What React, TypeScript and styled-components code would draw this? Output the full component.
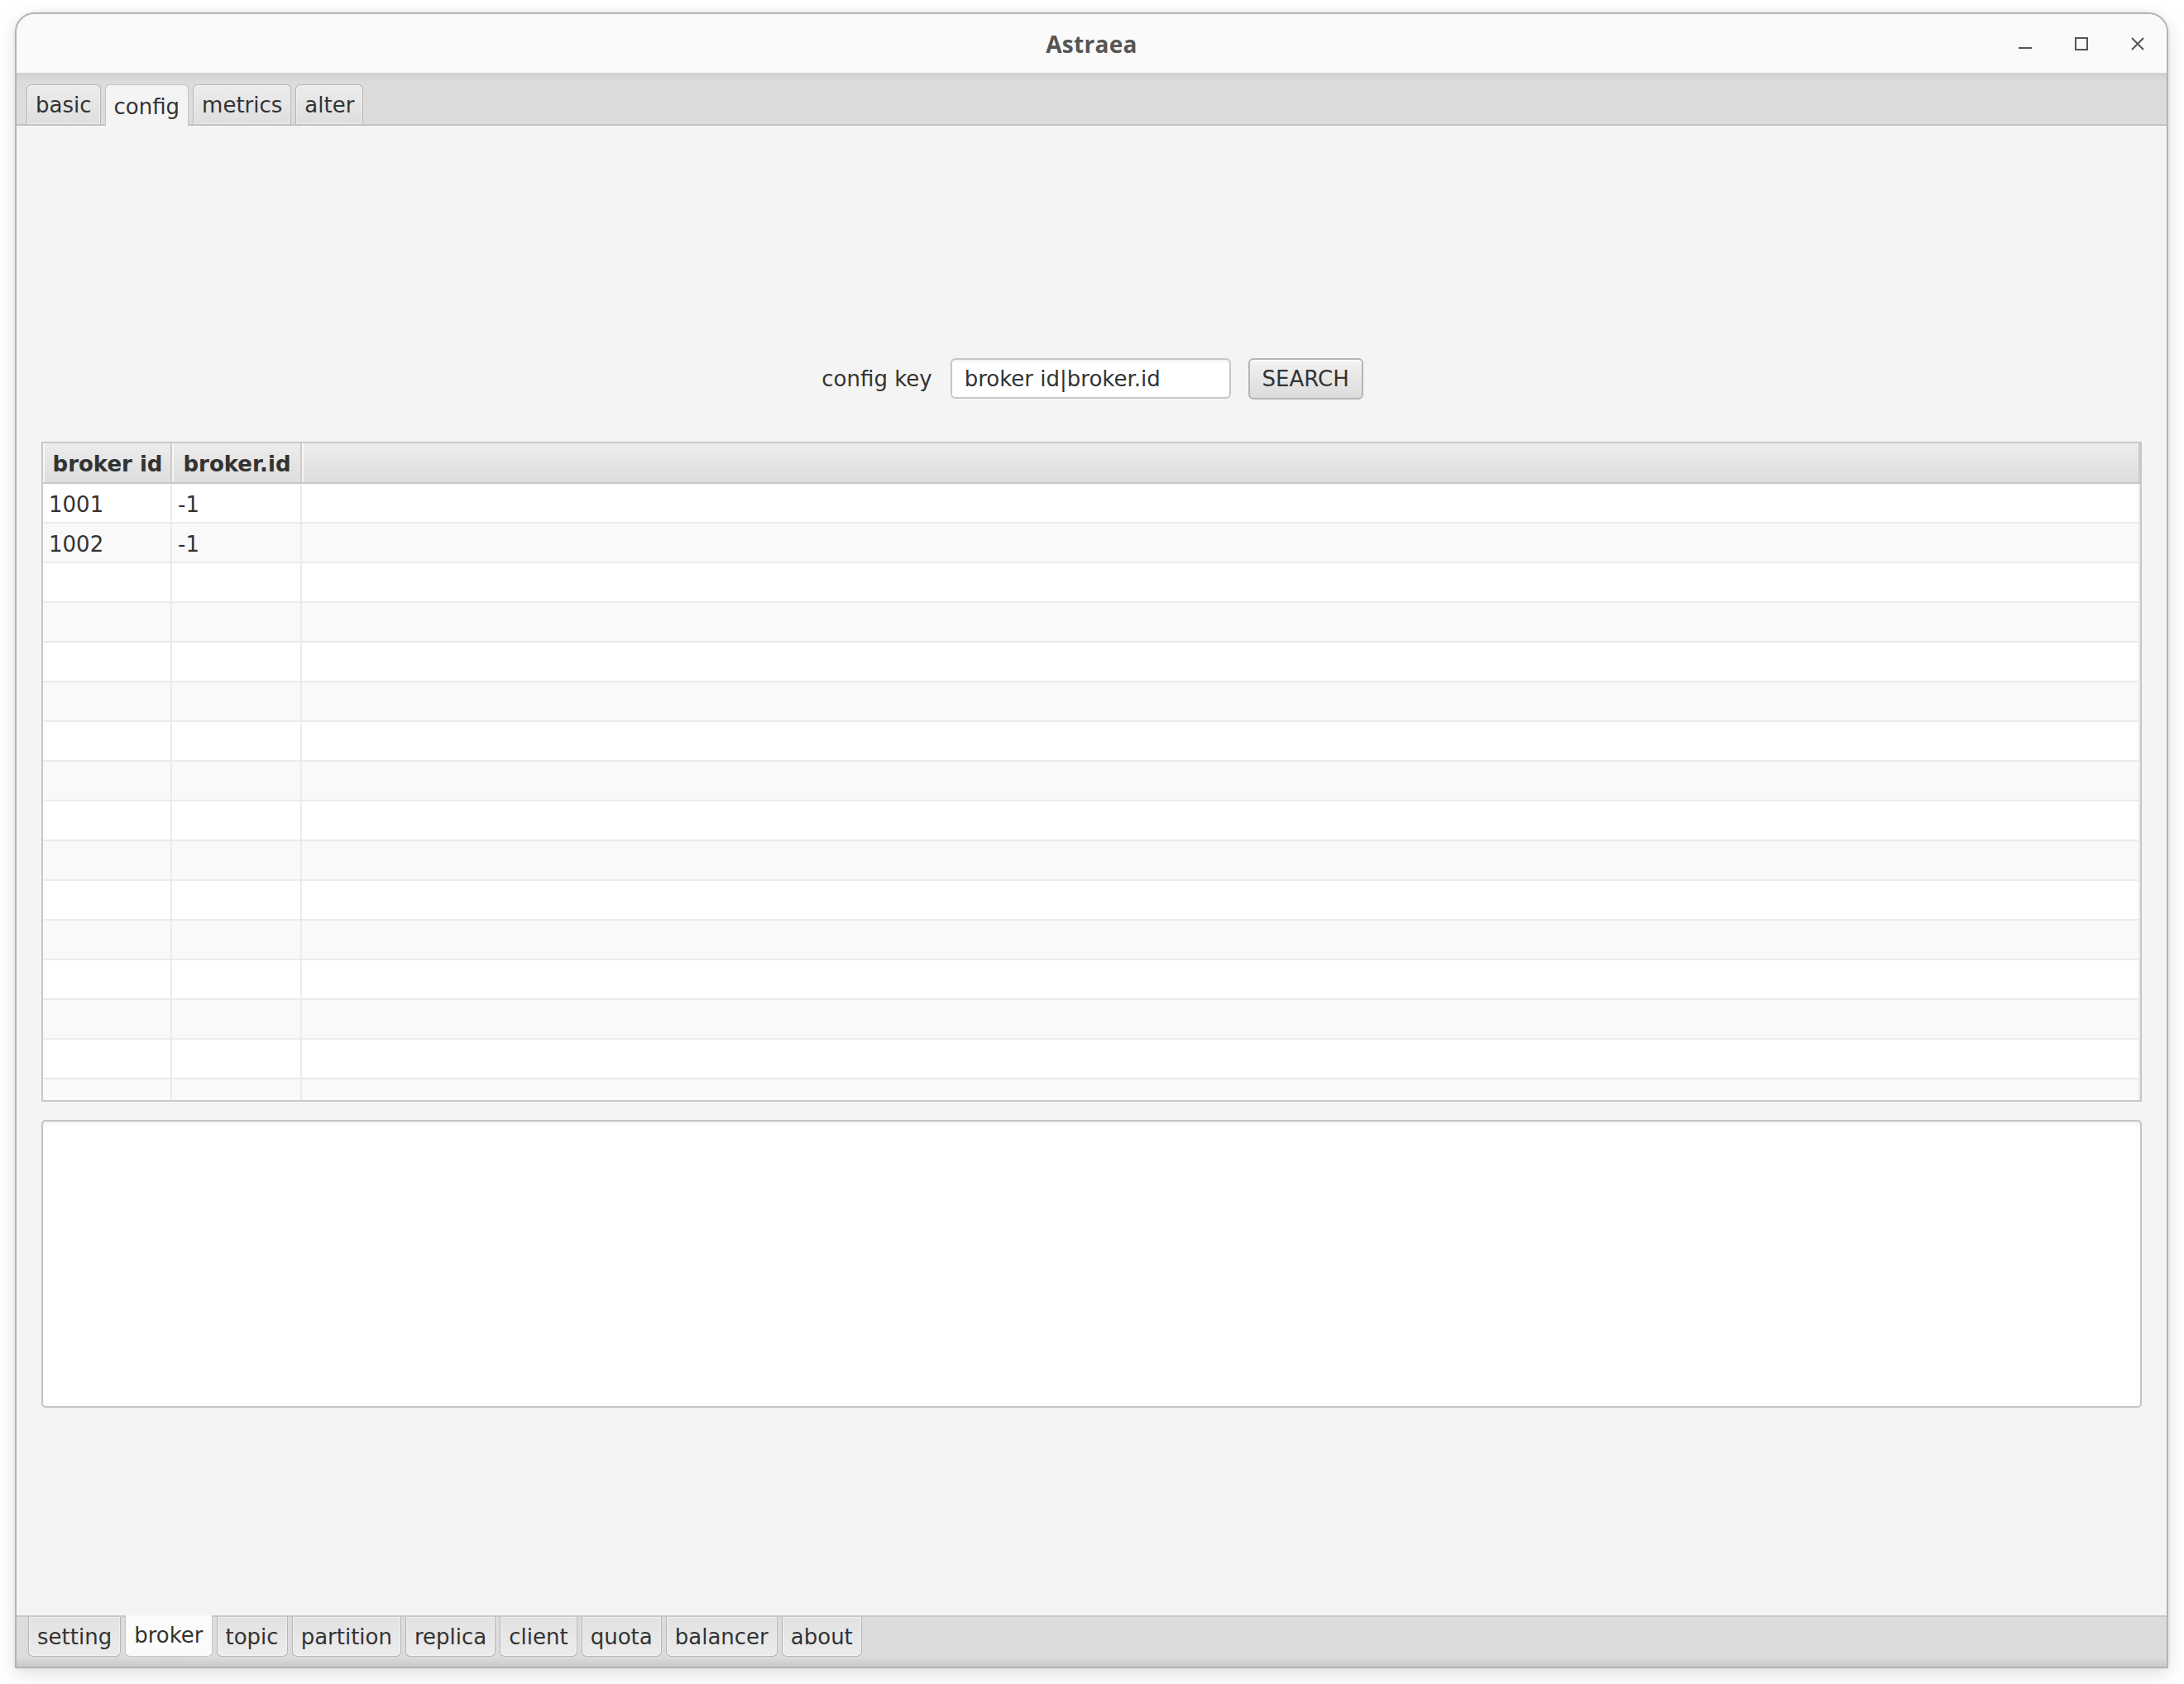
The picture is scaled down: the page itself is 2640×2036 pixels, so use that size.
import React from "react";
import styled, { createGlobalStyle } from "styled-components";

const GlobalStyle = createGlobalStyle`
  html, body { margin: 0; padding: 0; background: #ffffff; }
  body { font-family: "DejaVu Sans", "Liberation Sans", sans-serif; color: #333333; }
  * { box-sizing: border-box; }
`;

const Page = styled.div`
  padding: 15px 19px 19px 18px;
  width: 2640px;
  height: 2036px;
`;

const Window = styled.div`
  width: 2603px;
  height: 2002px;
  display: flex;
  flex-direction: column;
  border: 2px solid #b3b3b3;
  border-radius: 24px 24px 0 0;
  overflow: hidden;
  box-shadow: 0 6px 22px rgba(0, 0, 0, 0.13), 0 0 4px rgba(0, 0, 0, 0.08);
  background: #f4f4f4;
`;

const TitleBar = styled.div`
  height: 71px;
  flex: none;
  background: #fafafa;
  display: grid;
  grid-template-columns: 1fr auto 1fr;
  align-items: center;
`;

const Title = styled.div`
  grid-column: 2;
  font-family: "Open Sans", "Noto Sans", sans-serif;
  font-weight: 700;
  font-size: 28px;
  color: #555555;
  letter-spacing: 0.3px;
`;

const Controls = styled.div`
  grid-column: 3;
  justify-self: end;
  display: flex;
  align-items: center;
  gap: 52px;
  padding-right: 27px;
`;

const ControlIcon = styled.svg`
  width: 16px;
  height: 16px;
  display: block;
`;

const TabBar = styled.div<{ $bottom?: boolean }>`
  flex: none;
  height: ${(p) => (p.$bottom ? "62px" : "64px")};
  display: flex;
  align-items: ${(p) => (p.$bottom ? "flex-start" : "flex-end")};
  gap: ${(p) => (p.$bottom ? "5px" : "5px")};
  padding-left: ${(p) => (p.$bottom ? "14px" : "12px")};
  background: ${(p) =>
    p.$bottom
      ? "linear-gradient(to bottom, #dcdcdc 0, #dcdcdc 48px, #c9c9c9 60px, #c4c4c4 62px)"
      : "linear-gradient(to bottom, #d0d0d0 0, #dcdcdc 12px, #dcdcdc 100%)"};
  ${(p) =>
    p.$bottom
      ? "border-top: 2px solid #c8c8c8;"
      : "border-bottom: 2px solid #c2c2c2;"}
`;

const Tab = styled.div<{ $active?: boolean; $bottom?: boolean }>`
  height: ${(p) => (p.$active ? "50px" : "48px")};
  ${(p) => (p.$active ? (p.$bottom ? "margin-top: -2px;" : "margin-bottom: -2px;") : "")}
  padding: 0 10px;
  display: flex;
  align-items: center;
  font-size: 26px;
  color: #333333;
  white-space: nowrap;
  border: 1px solid ${(p) => (p.$active ? "#c4c4c4" : "#b4b4b4")};
  ${(p) => (p.$bottom ? "border-top: none;" : "border-bottom: none;")}
  border-radius: ${(p) => (p.$bottom ? "0 0 6px 6px" : "6px 6px 0 0")};
  background: ${(p) =>
    p.$active
      ? p.$bottom
        ? "#fbfbfb"
        : "#f4f4f4"
      : p.$bottom
      ? "linear-gradient(to bottom, #e2e2e2, #ececec)"
      : "linear-gradient(to bottom, #ececec, #dedede)"};
  box-shadow: ${(p) => (p.$active ? "none" : "inset 0 0 0 1px rgba(255, 255, 255, 0.45)")};
  ${(p) => (p.$active && !p.$bottom ? "padding-top: 2px;" : "")}
  ${(p) => (p.$active && p.$bottom ? "padding-bottom: 2px;" : "")}
`;

const Content = styled.div`
  flex: 1;
  display: flex;
  flex-direction: column;
  padding: 281px 30px 0 30px;
  background: #f4f4f4;
`;

const SearchRow = styled.div`
  height: 49px;
  display: flex;
  justify-content: center;
  align-items: center;
  padding-left: 2px;
`;

const Label = styled.span`
  font-size: 26px;
  color: #333333;
  margin-right: 22px;
`;

const Field = styled.div`
  width: 339px;
  height: 49px;
  border: 2px solid #c6c6c6;
  border-radius: 6px;
  background: #ffffff;
  box-shadow: inset 0 3px 3px -1px rgba(0, 0, 0, 0.06);
  display: flex;
  align-items: center;
  padding-left: 15px;
  font-size: 26px;
  color: #333333;
  margin-right: 21px;
`;

const Button = styled.div`
  width: 139px;
  height: 50px;
  border: 2px solid #b5b5b5;
  border-radius: 6px;
  background: linear-gradient(to bottom, #f2f2f2, #dcdcdc);
  box-shadow: inset 0 2px 0 rgba(255, 255, 255, 0.7);
  display: flex;
  align-items: center;
  justify-content: center;
  font-size: 26px;
  color: #333333;
`;

const Table = styled.div`
  margin-top: 52px;
  height: 798px;
  border: 2px solid #c8c8c8;
  background: #ffffff;
  overflow: hidden;
  display: flex;
  flex-direction: column;
`;

const HeaderRow = styled.div`
  flex: none;
  height: 49px;
  display: grid;
  grid-template-columns: 156px 157px 1fr;
  border-bottom: 2px solid #c8c8c8;
  background: linear-gradient(to bottom, #ededed, #dddddd);
`;

const HeaderCell = styled.div`
  display: flex;
  align-items: center;
  justify-content: center;
  padding-top: 3px;
  padding-left: 2px;
  font-size: 26px;
  font-weight: 700;
  color: #333333;
  border-right: 2px solid #cbcbcb;
  box-shadow: inset 2px 0 0 rgba(255, 255, 255, 0.6);
`;

const Row = styled.div<{ $odd: boolean }>`
  flex: none;
  height: 48px;
  display: grid;
  grid-template-columns: 156px 157px 1fr;
  border-bottom: 2px solid #ebebeb;
  background: ${(p) => (p.$odd ? "#f9f9f9" : "#ffffff")};
`;

const Cell = styled.div`
  display: flex;
  align-items: center;
  padding-left: 7px;
  padding-top: 4px;
  font-size: 26px;
  color: #333333;
  border-right: 2px solid #ebebeb;
`;

const TextArea = styled.div`
  margin-top: 22px;
  height: 348px;
  border: 2px solid #c4c4c4;
  border-radius: 5px;
  background: #ffffff;
  box-shadow: inset 0 4px 5px -2px rgba(0, 0, 0, 0.07);
`;

const topTabs = ["basic", "config", "metrics", "alter"];
const bottomTabs = [
  "setting",
  "broker",
  "topic",
  "partition",
  "replica",
  "client",
  "quota",
  "balancer",
  "about",
];

const rows: [string, string][] = [
  ["1001", "-1"],
  ["1002", "-1"],
];

export default function App() {
  const bodyRows = Array.from({ length: 16 }, (_, i) => rows[i] ?? ["", ""]);
  return (
    <>
      <GlobalStyle />
      <Page>
        <Window>
          <TitleBar>
            <Title>Astraea</Title>
            <Controls>
              <ControlIcon viewBox="0 0 16 16">
                <rect x="0" y="12" width="16" height="2" fill="#555" />
              </ControlIcon>
              <ControlIcon viewBox="0 0 16 16">
                <rect x="1" y="1" width="14" height="14" fill="none" stroke="#555" strokeWidth="2" />
              </ControlIcon>
              <ControlIcon viewBox="0 0 16 16">
                <path d="M1 1 L15 15 M15 1 L1 15" stroke="#555" strokeWidth="2" fill="none" />
              </ControlIcon>
            </Controls>
          </TitleBar>
          <TabBar>
            {topTabs.map((t) => (
              <Tab key={t} $active={t === "config"}>
                {t}
              </Tab>
            ))}
          </TabBar>
          <Content>
            <SearchRow>
              <Label>config key</Label>
              <Field>broker id|broker.id</Field>
              <Button>SEARCH</Button>
            </SearchRow>
            <Table>
              <HeaderRow>
                <HeaderCell>broker id</HeaderCell>
                <HeaderCell>broker.id</HeaderCell>
                <HeaderCell />
              </HeaderRow>
              {bodyRows.map((r, i) => (
                <Row key={i} $odd={i % 2 === 1}>
                  <Cell>{r[0]}</Cell>
                  <Cell>{r[1]}</Cell>
                  <Cell />
                </Row>
              ))}
            </Table>
            <TextArea />
          </Content>
          <TabBar $bottom>
            {bottomTabs.map((t) => (
              <Tab key={t} $bottom $active={t === "broker"}>
                {t}
              </Tab>
            ))}
          </TabBar>
        </Window>
      </Page>
    </>
  );
}
